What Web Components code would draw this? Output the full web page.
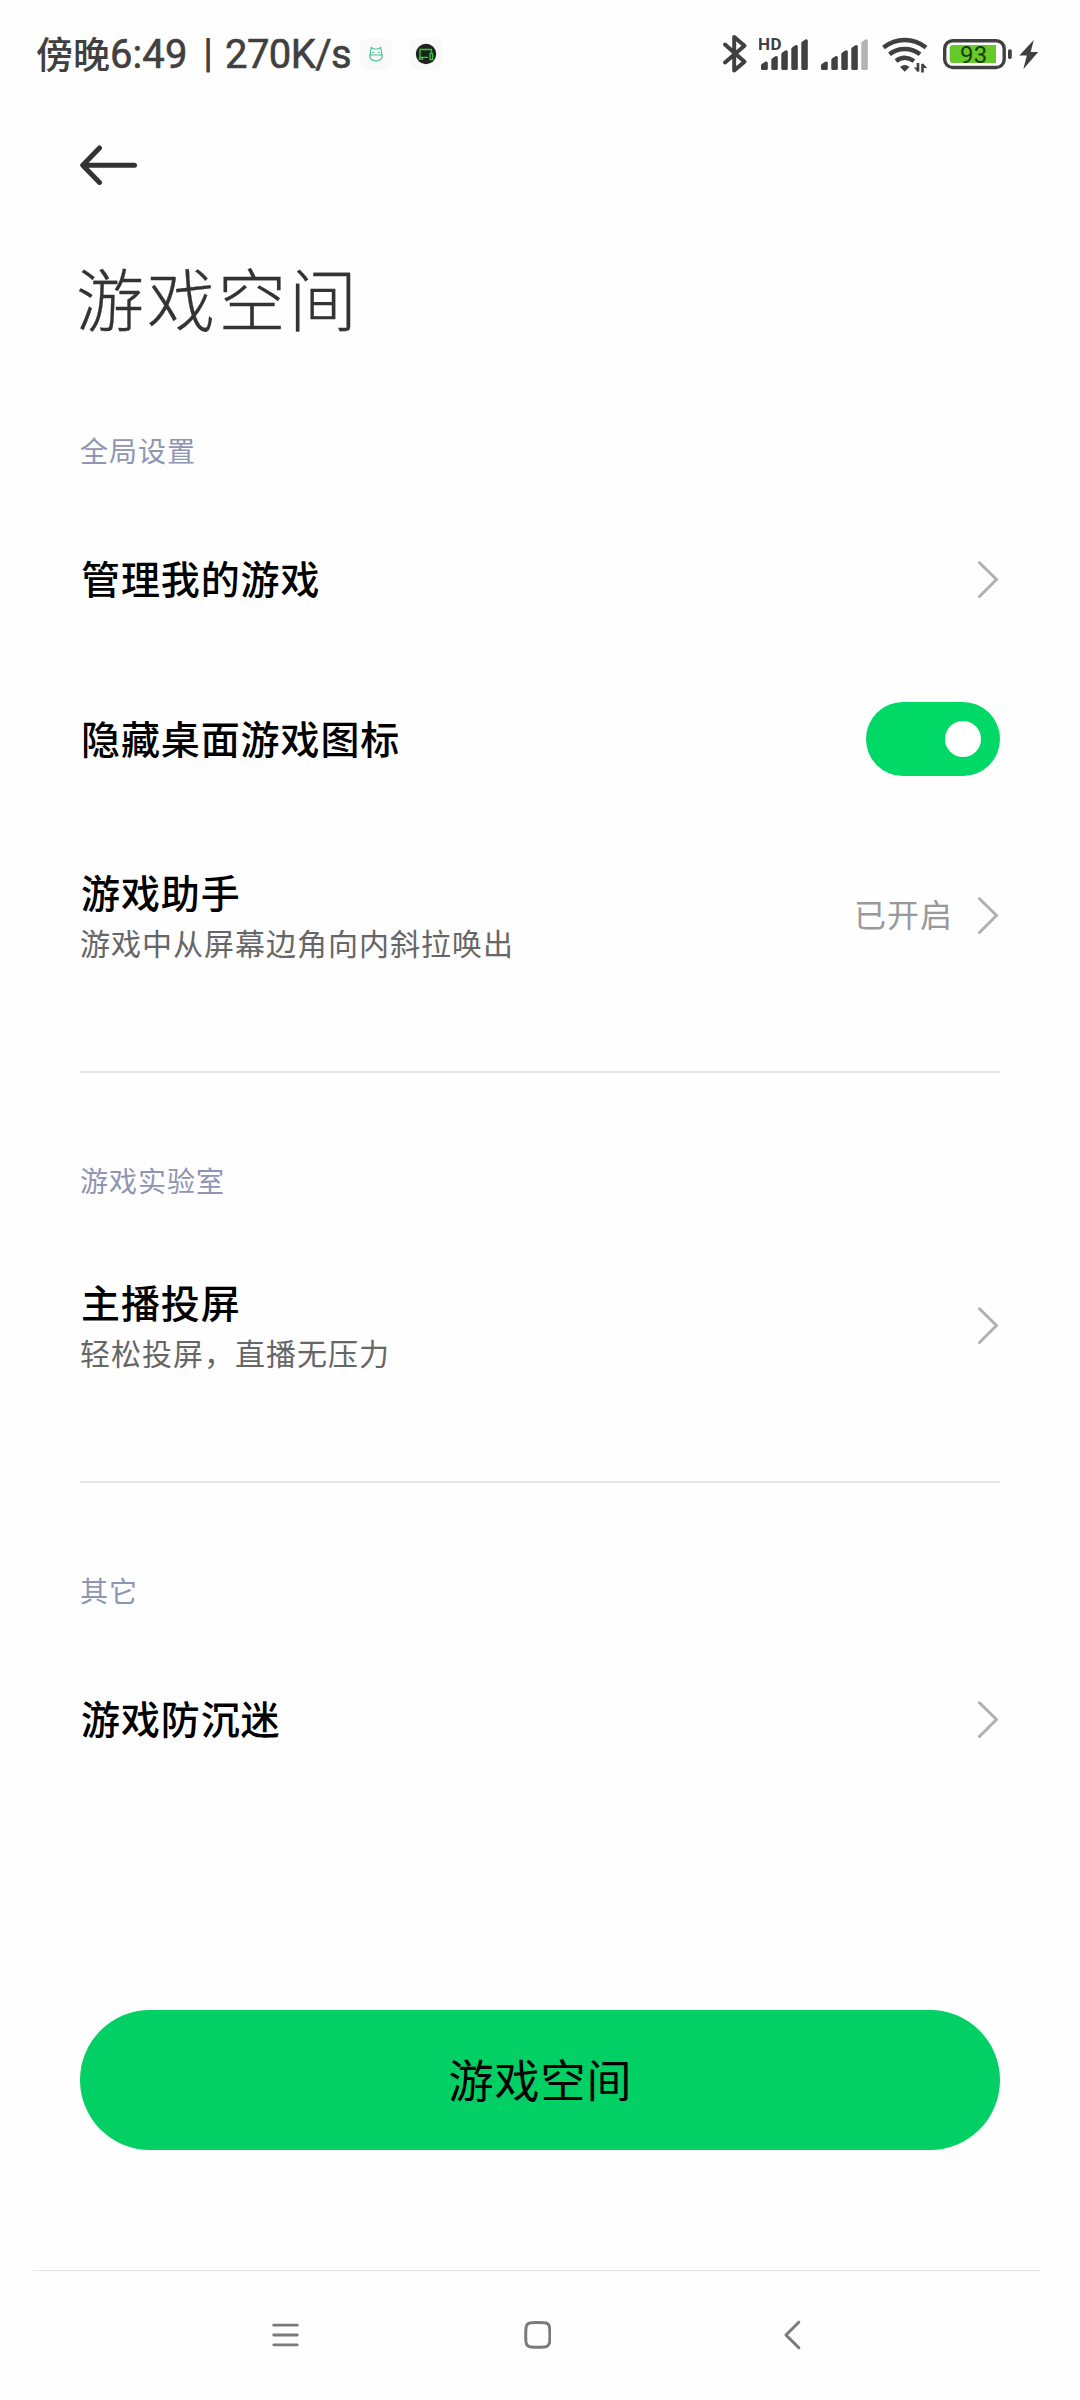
<!DOCTYPE html>
<html lang="zh-CN">
<head>
<meta charset="UTF-8">
<meta name="viewport" content="width=device-width, initial-scale=1.0">
<title>游戏空间</title>
<style>
  * { box-sizing: border-box; }
  body {
    margin: 0;
    width: 1080px;
    height: 2400px;
    background: #fefefe;
    color: #000;
    font-family: "Noto Sans CJK SC", "Noto Sans", sans-serif;
    display: flex;
    flex-direction: column;
    overflow: hidden;
  }
  main {
    flex: 1;
    padding: 0 80px;
    display: flex;
    flex-direction: column;
  }
</style>
</head>
<body>
  <status-bar time="6:49" speed="270K/s" battery="93"></status-bar>
  <main>
    <page-header>游戏空间</page-header>
    <setting-group label="全局设置">
      <setting-row>管理我的游戏</setting-row>
      <setting-row control="switch">隐藏桌面游戏图标</setting-row>
      <setting-row value="已开启" sub="游戏中从屏幕边角向内斜拉唤出">游戏助手</setting-row>
    </setting-group>
    <setting-group label="游戏实验室">
      <setting-row sub="轻松投屏，直播无压力">主播投屏</setting-row>
    </setting-group>
    <setting-group label="其它">
      <setting-row>游戏防沉迷</setting-row>
    </setting-group>
    <main-button>游戏空间</main-button>
  </main>
  <nav-bar></nav-bar>

<script>
class StatusBar extends HTMLElement {
  constructor() {
    super();
    this.attachShadow({ mode: 'open' });
  }

  connectedCallback() {
    const time = this.getAttribute('time');
    const speed = this.getAttribute('speed');
    const battery = this.getAttribute('battery');

    this.shadowRoot.innerHTML = `
      <style>
        :host {
          display: flex;
          align-items: center;
          height: 108px;
          padding: 0 42px 0 36px;
          color: #404040;
          fill: #404040;
          font: 400 40px/40px Roboto, "Noto Sans CJK SC", sans-serif;
          white-space: nowrap;
        }
        .cn { font: 500 37px/40px "Noto Sans CJK SC", sans-serif; width: 74px; margin-bottom: 3px; }
        .time { width: 93px; letter-spacing: .1px; margin-top: 2px; }
        .bar { width: 22px; font-weight: 700; font-size: 40px; margin-bottom: 1px; }
        .speed { width: 135px; letter-spacing: -.6px; margin-top: 2px; }
        .time, .speed { -webkit-text-stroke: .6px #404040; }
        svg { display: block; flex: none; }
        .app { margin-right: 18px; }
        .right { margin-left: auto; display: flex; align-items: center; }
      </style>
      <span class="cn">傍晚</span><span class="time">${time}</span><span class="bar">|</span><span class="speed">${speed}</span>
      <svg class="app" width="32" height="32" viewBox="0 0 32 32" fill="none" stroke="#45c48f" stroke-width="1.2">
        <rect width="32" height="32" rx="8" fill="#f9f9f9" stroke="none"/>
        <path d="M10.500 17V13.500l.8-4 2.700 1.500h4l2.700-1.500.8 4V17M9.800 17h12.400v1.500q-.5 4-6.200 4.300-5.700-.3-6.200-4.300z"/>
        <path d="M12.500 14.500h2M17.500 14.500h2"/>
      </svg>
      <svg class="app" width="32" height="32" viewBox="0 0 32 32" fill="none" stroke="#25d52b" stroke-width="1.300">
        <rect width="32" height="32" rx="8" fill="#f9f9f9" stroke="none"/>
        <circle cx="16" cy="16" r="10.200" fill="#202020" stroke="none"/>
        <path d="M21.500 14.500v-3H10v7.800h8M9.500 19.300v1.800h3v-1.500M20 15.500h2.500v6H20z"/>
      </svg>
      <div class="right">
        <svg width="26" height="40" viewBox="0 0 26 40" fill="none" stroke="#404040" stroke-width="4" stroke-linecap="round" stroke-linejoin="round">
          <path d="M3 10.500l19.500 17.300-10.300 8.700V3l10.300 8.700L3 28.500"/>
        </svg>
        <svg width="50" height="40" viewBox="0 0 50 40" style="margin-left:11px">
          <text x="-1" y="16" font-family="Roboto, sans-serif" font-size="17" font-weight="700" letter-spacing=".4">HD</text>
          ${this.bars(2)}
        </svg>
        <svg width="48" height="40" viewBox="0 0 48 40" style="margin-left:12px">${this.bars(0, true)}</svg>
        <svg width="46" height="40" viewBox="0 0 46 40" fill="none" stroke="#404040" style="margin-left:13px">
          <path stroke-width="4.500" d="M1.500 13.500Q11 6 22.700 6T44 13.500"/>
          <path stroke-width="4.500" d="M7.500 20.300Q14 15 22.700 15T38 20.300"/>
          <path stroke-width="4.500" d="M14 27Q18 23.800 22.700 23.800T32 27"/>
          <path stroke="none" fill="#404040" d="M18 33q4.700-4 9.500 0l-4.700 4.800z"/>
          <path stroke-width="2.600" d="M36 29v8.500M40.500 38.500V30"/>
          <path stroke="none" fill="#404040" d="M31.800 33.500H36V38zM40.500 29l4.700 5h-4.700z"/>
        </svg>
        <svg width="69" height="40" viewBox="0 0 69 40" style="margin-left:15px">
          <rect x="1.700" y="6.700" width="59.500" height="26.800" rx="8" fill="#fff" stroke="#404040" stroke-width="3.400"/>
          <path fill="#66ca2a" d="M10 11h43v18H10a3.300 3.300 0 0 1-3.300-3.300v-11.400A3.300 3.300 0 0 1 10 11z"/>
          <text x="17" y="29" fill="#1e390e" font-family="Roboto, sans-serif" font-size="24" font-weight="400" letter-spacing=".3">${battery}</text>
          <rect x="65" y="15.300" width="3.800" height="9.700" rx="1.700"/>
        </svg>
        <svg width="20" height="40" viewBox="0 0 20 40" style="margin-left:7px;margin-right:-1px">
          <path d="M14.800 6L.3 21.500h7.500L4.300 35.300 19.200 18h-7.500z"/>
        </svg>
      </div>
    `;
  }

  // five slanted bars, the last one dimmed when the signal is not full
  bars(x, weak = false) {
    const tops = [27.5, 22, 16.3, 11, 5.3];
    return tops.map((top, i) => {
      const left = i ? x + .3 + i * 10 : x;
      const right = x + 6.8 + i * 10;
      const fill = weak && i === 4 ? '#b3b3b3' : '#404040';
      return `<path fill="${fill}" d="M${left} ${top + 4}Q${left} ${top + 3} ${left + 1} ${top + 2.3}L${right - 2} ${top}Q${right} ${top - .4} ${right} ${top + 1.5}V34.500q0 1.500-1.500 1.500H${left + 1.5}q-1.500 0-1.500-1.500z"/>`;
    }).join('');
  }
}

class PageHeader extends HTMLElement {
  constructor() {
    super();
    this.attachShadow({ mode: 'open' }).innerHTML = `
      <style>
        :host { display: block; height: 293px; color: #333; }
        svg { display: block; padding-top: 37px; box-sizing: content-box; }
        h1 {
          margin: 72px 0 0 -4px;
          font-size: 68px;
          line-height: 80px;
          font-weight: 300;
          letter-spacing: 3px;
          -webkit-text-stroke: .3px #333;
        }
      </style>
      <svg width="58" height="40" viewBox="0 0 58 40" fill="none" stroke="#333" stroke-width="5" stroke-linecap="round" stroke-linejoin="round">
        <path d="M54.500 20.300H3M19.500 3L2.700 20.300 19.500 37.500"/>
      </svg>
      <h1><slot></slot></h1>
    `;
  }
}

class SettingGroup extends HTMLElement {
  constructor() {
    super();
    this.attachShadow({ mode: 'open' });
  }

  connectedCallback() {
    this.shadowRoot.innerHTML = `
      <style>
        :host { display: block; }
        :host(:not(:first-of-type)) {
          margin-top: 59px;
          border-top: 2px solid #e5e5e5;
          padding-top: 58px;
        }
        .label {
          height: 99px;
          line-height: 98px;
          font-size: 28px;
          letter-spacing: 1px;
          color: #8f95b2;
        }
      </style>
      <div class="label">${this.getAttribute('label')}</div>
      <slot></slot>
    `;
  }
}

class SettingRow extends HTMLElement {
  constructor() {
    super();
    this.attachShadow({ mode: 'open' });
  }

  connectedCallback() {
    const sub = this.getAttribute('sub');
    const value = this.getAttribute('value');
    const isSwitch = this.getAttribute('control') === 'switch';

    this.shadowRoot.innerHTML = `
      <style>
        :host {
          display: flex;
          align-items: center;
          justify-content: space-between;
          height: ${sub ? 192 : 160}px;
        }
        .title {
          font-size: 39px;
          line-height: 56px;
          font-weight: 500;
          letter-spacing: .9px;
          margin: ${sub ? '-4px 0 0' : '-6px 0 0'} 1px;
        }
        .sub {
          font-size: 30px;
          line-height: 46px;
          letter-spacing: 1px;
          color: #666;
        }
        .end { display: flex; align-items: center; }
        .value {
          font-size: 32px;
          line-height: 48px;
          letter-spacing: 1px;
          margin: -6px 25px 0 0;
          color: #999;
        }
        svg { display: block; }
      </style>
      <div>
        <div class="title"><slot></slot></div>
        ${sub ? `<div class="sub">${sub}</div>` : ''}
      </div>
      <div class="end">
        ${value ? `<span class="value">${value}</span>` : ''}
        ${isSwitch ? '<toggle-switch></toggle-switch>' : `
        <svg width="22" height="38" viewBox="0 0 22 38" fill="none" stroke="#b0b0b0" stroke-width="3" stroke-linecap="round" stroke-linejoin="round">
          <path d="M1.500 1.800L18.500 18.500 1.500 35.500"/>
        </svg>`}
      </div>
    `;
  }
}

class ToggleSwitch extends HTMLElement {
  constructor() {
    super();
    this.attachShadow({ mode: 'open' }).innerHTML = `
      <style>
        :host {
          display: flex;
          align-items: center;
          justify-content: flex-end;
          box-sizing: border-box;
          width: 134px;
          height: 74px;
          margin-bottom: 2px;
          padding-right: 19px;
          border-radius: 37px;
          background: #00d966;
        }
        .knob {
          width: 36px;
          height: 36px;
          border-radius: 50%;
          background: #fff;
        }
      </style>
      <div class="knob"></div>
    `;
  }
}

class MainButton extends HTMLElement {
  constructor() {
    super();
    this.attachShadow({ mode: 'open' }).innerHTML = `
      <style>
        :host { display: block; margin-top: auto; margin-bottom: 120px; }
        button {
          display: block;
          width: 100%;
          height: 140px;
          padding: 0 0 3px 1px;
          border: 0;
          border-radius: 70px;
          background: #03d064;
          color: #000;
          font: 400 45px/60px "Noto Sans CJK SC", sans-serif;
          letter-spacing: 1px;
        }
      </style>
      <button><slot></slot></button>
    `;
  }
}

class NavBar extends HTMLElement {
  constructor() {
    super();
    this.attachShadow({ mode: 'open' }).innerHTML = `
      <style>
        :host {
          display: flex;
          align-items: center;
          box-sizing: border-box;
          height: 130px;
          margin: 0 40px 0 33px;
          padding: 0 239px 2px;
          border-top: 1px solid #e4e4e4;
        }
        svg { display: block; fill: none; stroke: #7a7a7a; stroke-width: 3; stroke-linecap: round; stroke-linejoin: round; }
        .home { margin: 0 233px 0 224px; }
      </style>
      <svg width="28" height="30" viewBox="0 0 28 30"><path d="M1.800 5h23.800M1.800 15h23.800M1.800 25h23.800"/></svg>
      <svg class="home" width="28" height="30" viewBox="0 0 28 30"><path d="M7.500 2.500Q14 2 20.500 2.500 25.500 2.500 26 8q.5 7 0 14-.5 5-5.500 5.200-6.500.5-13 0Q2.500 27 2 22q-.5-7 0-14 .5-5.500 5.500-5.500z"/></svg>
      <svg width="17" height="30" viewBox="0 0 17 30"><path d="M15 2L2 15l13 13"/></svg>
    `;
  }
}

customElements.define('status-bar', StatusBar);
customElements.define('page-header', PageHeader);
customElements.define('toggle-switch', ToggleSwitch);
customElements.define('setting-group', SettingGroup);
customElements.define('setting-row', SettingRow);
customElements.define('main-button', MainButton);
customElements.define('nav-bar', NavBar);
</script>
</body>
</html>
